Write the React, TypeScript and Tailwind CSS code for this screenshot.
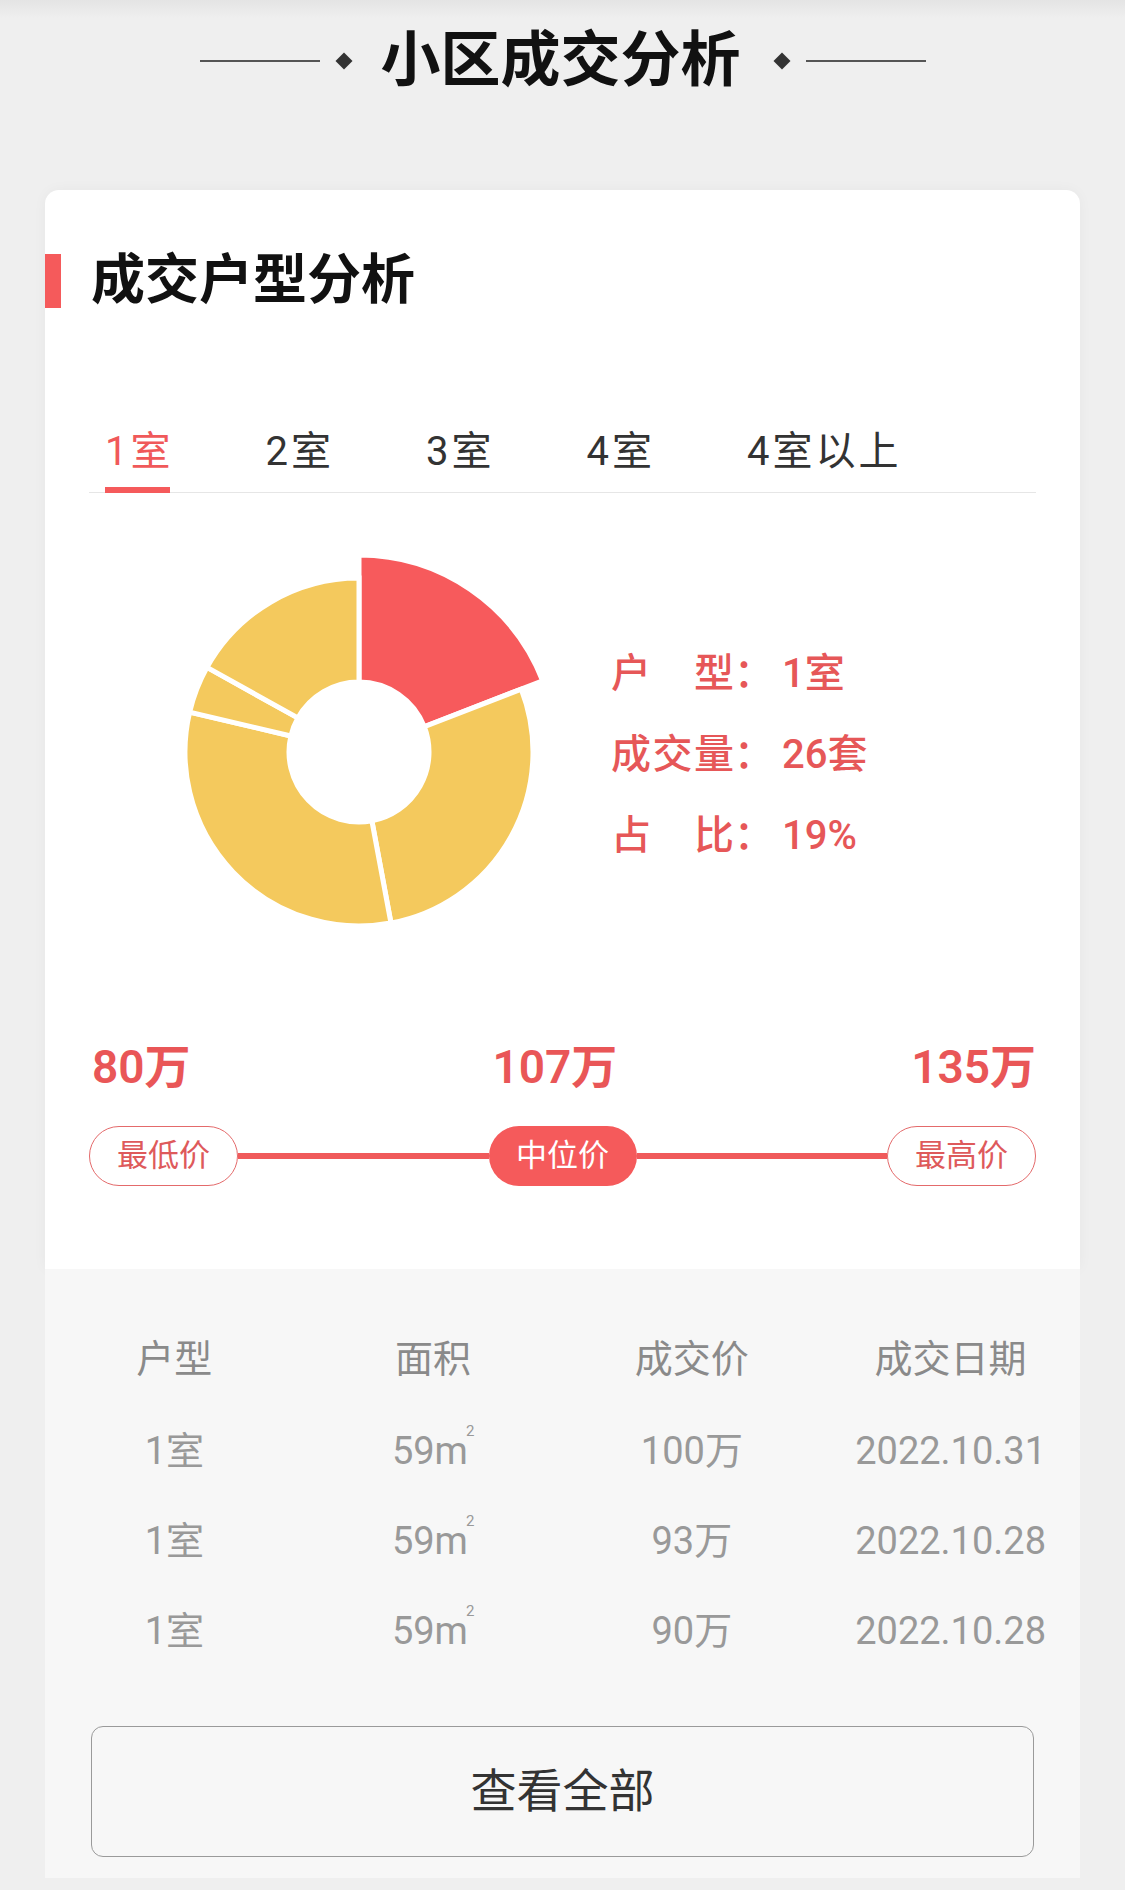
import React, { useState } from "react";

const FONT = "font-['Roboto','Noto_Sans_CJK_SC',sans-serif]";

const tabs = ["1室", "2室", "3室", "4室", "4室以上"];

// share of each room type, clockwise from 12 o'clock
const slices = [
  { value: 26, color: "#f75a5c", active: true },
  { value: 38, color: "#f4c95d" },
  { value: 43, color: "#f4c95d" },
  { value: 6, color: "#f4c95d" },
  { value: 23, color: "#f4c95d" },
];

const rows = [
  { type: "1室", area: "59", price: "100万", date: "2022.10.31" },
  { type: "1室", area: "59", price: "93万", date: "2022.10.28" },
  { type: "1室", area: "59", price: "90万", date: "2022.10.28" },
];

function pt(cx: number, cy: number, r: number, deg: number) {
  const a = (deg * Math.PI) / 180;
  return [cx + r * Math.sin(a), cy - r * Math.cos(a)];
}

function arc(cx: number, cy: number, r0: number, r1: number, a0: number, a1: number) {
  const large = a1 - a0 > 180 ? 1 : 0;
  const [x0, y0] = pt(cx, cy, r1, a0);
  const [x1, y1] = pt(cx, cy, r1, a1);
  const [x2, y2] = pt(cx, cy, r0, a1);
  const [x3, y3] = pt(cx, cy, r0, a0);
  return `M${x0} ${y0} A${r1} ${r1} 0 ${large} 1 ${x1} ${y1} L${x2} ${y2} A${r0} ${r0} 0 ${large} 0 ${x3} ${y3} Z`;
}

function Donut() {
  const total = slices.reduce((s, x) => s + x.value, 0);
  let start = 0;
  return (
    <svg width="400" height="400" viewBox="0 0 400 400" className="shrink-0">
      {slices.map((s, i) => {
        const end = start + (s.value / total) * 360;
        const d = arc(200, 200, 70, s.active ? 197 : 174, start, end);
        start = end;
        return <path key={i} d={d} fill={s.color} stroke="#fff" strokeWidth={5} strokeLinejoin="miter" />;
      })}
    </svg>
  );
}

function Label({ a, b, c }: { a: string; b?: string; c?: string }) {
  return (
    <span className="flex w-[123px] justify-between">
      <span>{a}</span>
      {b && <span>{b}</span>}
      {c && <span>{c}</span>}
    </span>
  );
}

function InfoLine({ label, value }: { label: React.ReactNode; value: string }) {
  return (
    <div className="flex items-center h-[81px]">
      {label}
      <span className="w-[40px]">：</span>
      <span className="ml-[8px]">{value}</span>
    </div>
  );
}

function Pill({ text, filled }: { text: string; filled?: boolean }) {
  return (
    <div
      className={
        filled
          ? "w-[148px] h-[60px] rounded-full bg-[#f55a5b] text-white flex items-center justify-center text-[31px]"
          : "w-[149px] h-[60px] rounded-full border-[1.5px] border-[#e46a6b] text-[#de5a5b] bg-white flex items-center justify-center text-[31px]"
      }
    >
      {text}
    </div>
  );
}

export default function App() {
  const [tab, setTab] = useState(0);

  return (
    <div className={`${FONT} w-[1125px] h-[1890px] bg-[linear-gradient(to_bottom,#e4e4e4_0px,#efefef_18px)] overflow-hidden`}>
      {/* page title */}
      <div className="flex items-center justify-center pt-[31px] h-[91px]">
        <div className="w-[120px] h-[2px] bg-[#555]" />
        <div className="ml-[18px] w-[12px] h-[12px] rotate-45 bg-[#333]" />
        <h1 className="ml-[31px] mr-[35px] text-[60px] leading-[60px] font-semibold text-[#111]">小区成交分析</h1>
        <div className="w-[12px] h-[12px] rotate-45 bg-[#333]" />
        <div className="ml-[18px] w-[120px] h-[2px] bg-[#555]" />
      </div>

      {/* card */}
      <div className="mx-[45px] mt-[99px] w-[1035px] rounded-t-[14px] bg-white shadow-[0_0_14px_rgba(0,0,0,0.04)]">
        <div className="pt-[64px] flex items-center">
          <div className="w-[16px] h-[54px] bg-[#f55a5b]" />
          <h2 className="ml-[30px] text-[54px] leading-[54px] font-semibold text-[#111]">成交户型分析</h2>
        </div>

        <div className="px-[44px]">
          {/* tabs */}
          <div className="mt-[124px] flex gap-[92px] pl-[16px] border-b border-[#e6e6e6]">
            {tabs.map((t, i) => (
              <button
                key={t}
                onClick={() => setTab(i)}
                className={`relative pb-[20px] text-[40px] leading-[40px] tracking-[3px] ${i === tab ? "text-[#f0595a]" : "text-[#333]"}`}
              >
                {t}
                {i === tab && <span className="absolute left-0 right-[3px] bottom-[-1px] h-[6px] bg-[#f55a5b]" />}
              </button>
            ))}
          </div>

          {/* donut + detail */}
          <div className="mt-[59px] flex items-center">
            <div className="ml-[70px]">
              <Donut />
            </div>
            <div className="ml-[52px] pt-[6px] text-[40px] leading-[40px] font-medium text-[#e65758]">
              <InfoLine label={<Label a="户" b="型" />} value="1室" />
              <InfoLine label={<Label a="成" b="交" c="量" />} value="26套" />
              <InfoLine label={<Label a="占" b="比" />} value="19%" />
            </div>
          </div>

          {/* price range */}
          <div className="mt-[92px] flex justify-between items-center text-[46px] leading-[46px] font-semibold text-[#e95657]">
            <span className="ml-[3px]">80万</span>
            <span className="ml-[8px]">107万</span>
            <span>135万</span>
          </div>
          <div className="mt-[36px] flex items-center pb-[83px]">
            <Pill text="最低价" />
            <div className="flex-1 h-[6px] bg-[#f05a5b]" />
            <Pill text="中位价" filled />
            <div className="flex-1 h-[6px] bg-[#f05a5b]" />
            <Pill text="最高价" />
          </div>
        </div>
      </div>

      {/* deals table */}
      <div className="mx-[45px] w-[1035px] bg-[#f7f7f7] pt-[44px] pb-[21px]">
        <div className="grid grid-cols-4 h-[93px] items-center text-center text-[38px] text-[#8a8a8a]">
          <span>户型</span>
          <span>面积</span>
          <span>成交价</span>
          <span>成交日期</span>
        </div>
        {rows.map((r, i) => (
          <div key={i} className="grid grid-cols-4 h-[90px] items-center text-center text-[38px] text-[#999]">
            <span>{r.type}</span>
            <span>
              {r.area}m<sup className="text-[15px] align-[20px] -ml-[2px]">2</sup>
            </span>
            <span>{r.price}</span>
            <span>{r.date}</span>
          </div>
        ))}
        <div className="mt-[50px] mx-[46px] h-[131px] rounded-[12px] border-[1.5px] border-[#9a9a9a] flex items-center justify-center text-[46px] text-[#333]">
          查看全部
        </div>
      </div>
    </div>
  );
}
